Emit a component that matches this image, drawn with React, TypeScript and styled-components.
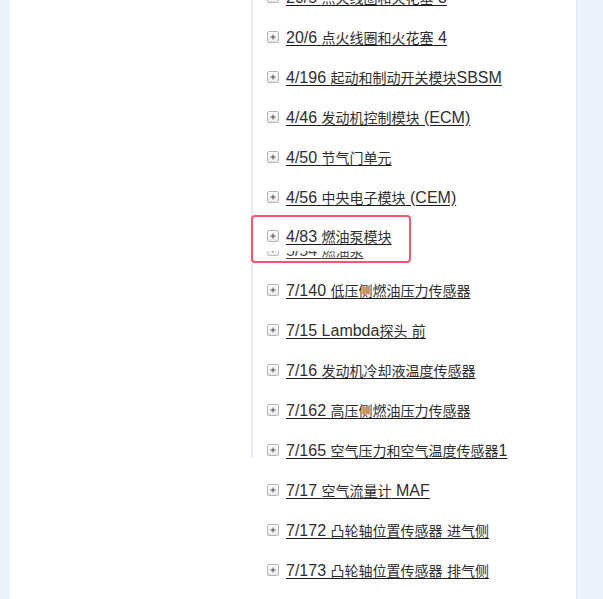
import React from "react";
import styled, { createGlobalStyle } from "styled-components";

const Global = createGlobalStyle`
  html, body { margin: 0; padding: 0; }
  body {
    background: #edf1f9;
    height: 599px;
    overflow: hidden;
    font-family: "Liberation Sans", Arial, "Noto Sans CJK SC", sans-serif;
  }
`;

const Page = styled.div`
  display: flex;
  height: 599px;
  padding-left: 10px;
`;

const Panel = styled.div`
  width: 566px;
  height: 599px;
  background: #ffffff;
  border-right: 1px solid #e2e5ec;
  display: flex;
  align-items: flex-start;
  overflow: hidden;
`;

const Sidebar = styled.div`
  width: 241px;
  height: 458px;
  flex: none;
  border-right: 2px solid #e6e9f2;
`;

const List = styled.div`
  display: flex;
  flex-direction: column;
  margin-top: -23px;
  padding-left: 14px;
`;

const Row = styled.div<{ $h?: number; $pt?: number }>`
  display: flex;
  align-items: center;
  gap: 7px;
  height: ${(p) => p.$h ?? 40}px;
  padding-top: ${(p) => p.$pt ?? 0}px;
  box-sizing: border-box;
  white-space: nowrap;
`;

const PlusBox = styled.span`
  width: 12px;
  height: 12px;
  box-sizing: border-box;
  border: 1px solid #b4b4b4;
  border-radius: 2px;
  background: linear-gradient(#ffffff, #e9e9e9);
  display: flex;
  align-items: center;
  justify-content: center;
  flex: none;
`;

const Label = styled.a`
  font-size: 16px;
  color: #2e2e2e;
  text-decoration: underline;
  text-decoration-color: #1a1a1a;
  text-underline-offset: 2px;
  line-height: 20px;
  cursor: pointer;
`;

const Cjk = styled.span`
  font-family: "Noto Sans CJK SC", sans-serif;
  font-size: 14px;
`;

const Slot = styled.div`
  height: 55px;
  margin-top: -2px;
  display: flex;
  flex-direction: column;
`;

const HighlightBox = styled.div`
  width: 160px;
  height: 48px;
  box-sizing: border-box;
  margin-left: -16px;
  border: 2px solid #f4566b;
  border-radius: 4px;
  background: #ffffff;
  padding-left: 14px;
  display: flex;
  flex-direction: column;
  overflow: hidden;
`;

const ClipWindow = styled.div`
  height: 10px;
  overflow: hidden;
  opacity: 0.85;
`;

const ClippedRow = styled(Row)`
  margin-top: -11px;
`;

const Plus = () => (
  <PlusBox>
    <svg width="8" height="8" viewBox="0 0 8 8">
      <path d="M4 1.5v5M1.5 4h5" stroke="#4a4a4a" strokeWidth="1" />
    </svg>
  </PlusBox>
);

const Text = ({ t }: { t: string }) => {
  const parts = t.split(/([\u4e00-\u9fff]+)/).filter(Boolean);
  return (
    <Label>
      {parts.map((p, i) =>
        /[\u4e00-\u9fff]/.test(p) ? <Cjk key={i}>{p}</Cjk> : <React.Fragment key={i}>{p}</React.Fragment>
      )}
    </Label>
  );
};

const before = [
  "20/5 点火线圈和火花塞 3",
  "20/6 点火线圈和火花塞 4",
  "4/196 起动和制动开关模块SBSM",
  "4/46 发动机控制模块 (ECM)",
  "4/50 节气门单元",
  "4/56 中央电子模块 (CEM)",
];

const after = [
  "7/140 低压侧燃油压力传感器",
  "7/15 Lambda探头 前",
  "7/16 发动机冷却液温度传感器",
  "7/162 高压侧燃油压力传感器",
  "7/165 空气压力和空气温度传感器1",
  "7/17 空气流量计 MAF",
  "7/172 凸轮轴位置传感器 进气侧",
  "7/173 凸轮轴位置传感器 排气侧",
];

export default function App() {
  return (
    <>
      <Global />
      <Page>
        <Panel>
          <Sidebar />
          <List>
            {before.map((t) => (
              <Row key={t}>
                <Plus />
                <Text t={t} />
              </Row>
            ))}
            <Slot>
              <HighlightBox>
                <Row $h={34} $pt={4}>
                  <Plus />
                  <Text t="4/83 燃油泵模块" />
                </Row>
                <ClipWindow>
                  <ClippedRow $h={20}>
                    <Plus />
                    <Text t="5/54 燃油泵" />
                  </ClippedRow>
                </ClipWindow>
              </HighlightBox>
            </Slot>
            {after.map((t) => (
              <Row key={t}>
                <Plus />
                <Text t={t} />
              </Row>
            ))}
          </List>
        </Panel>
      </Page>
    </>
  );
}
